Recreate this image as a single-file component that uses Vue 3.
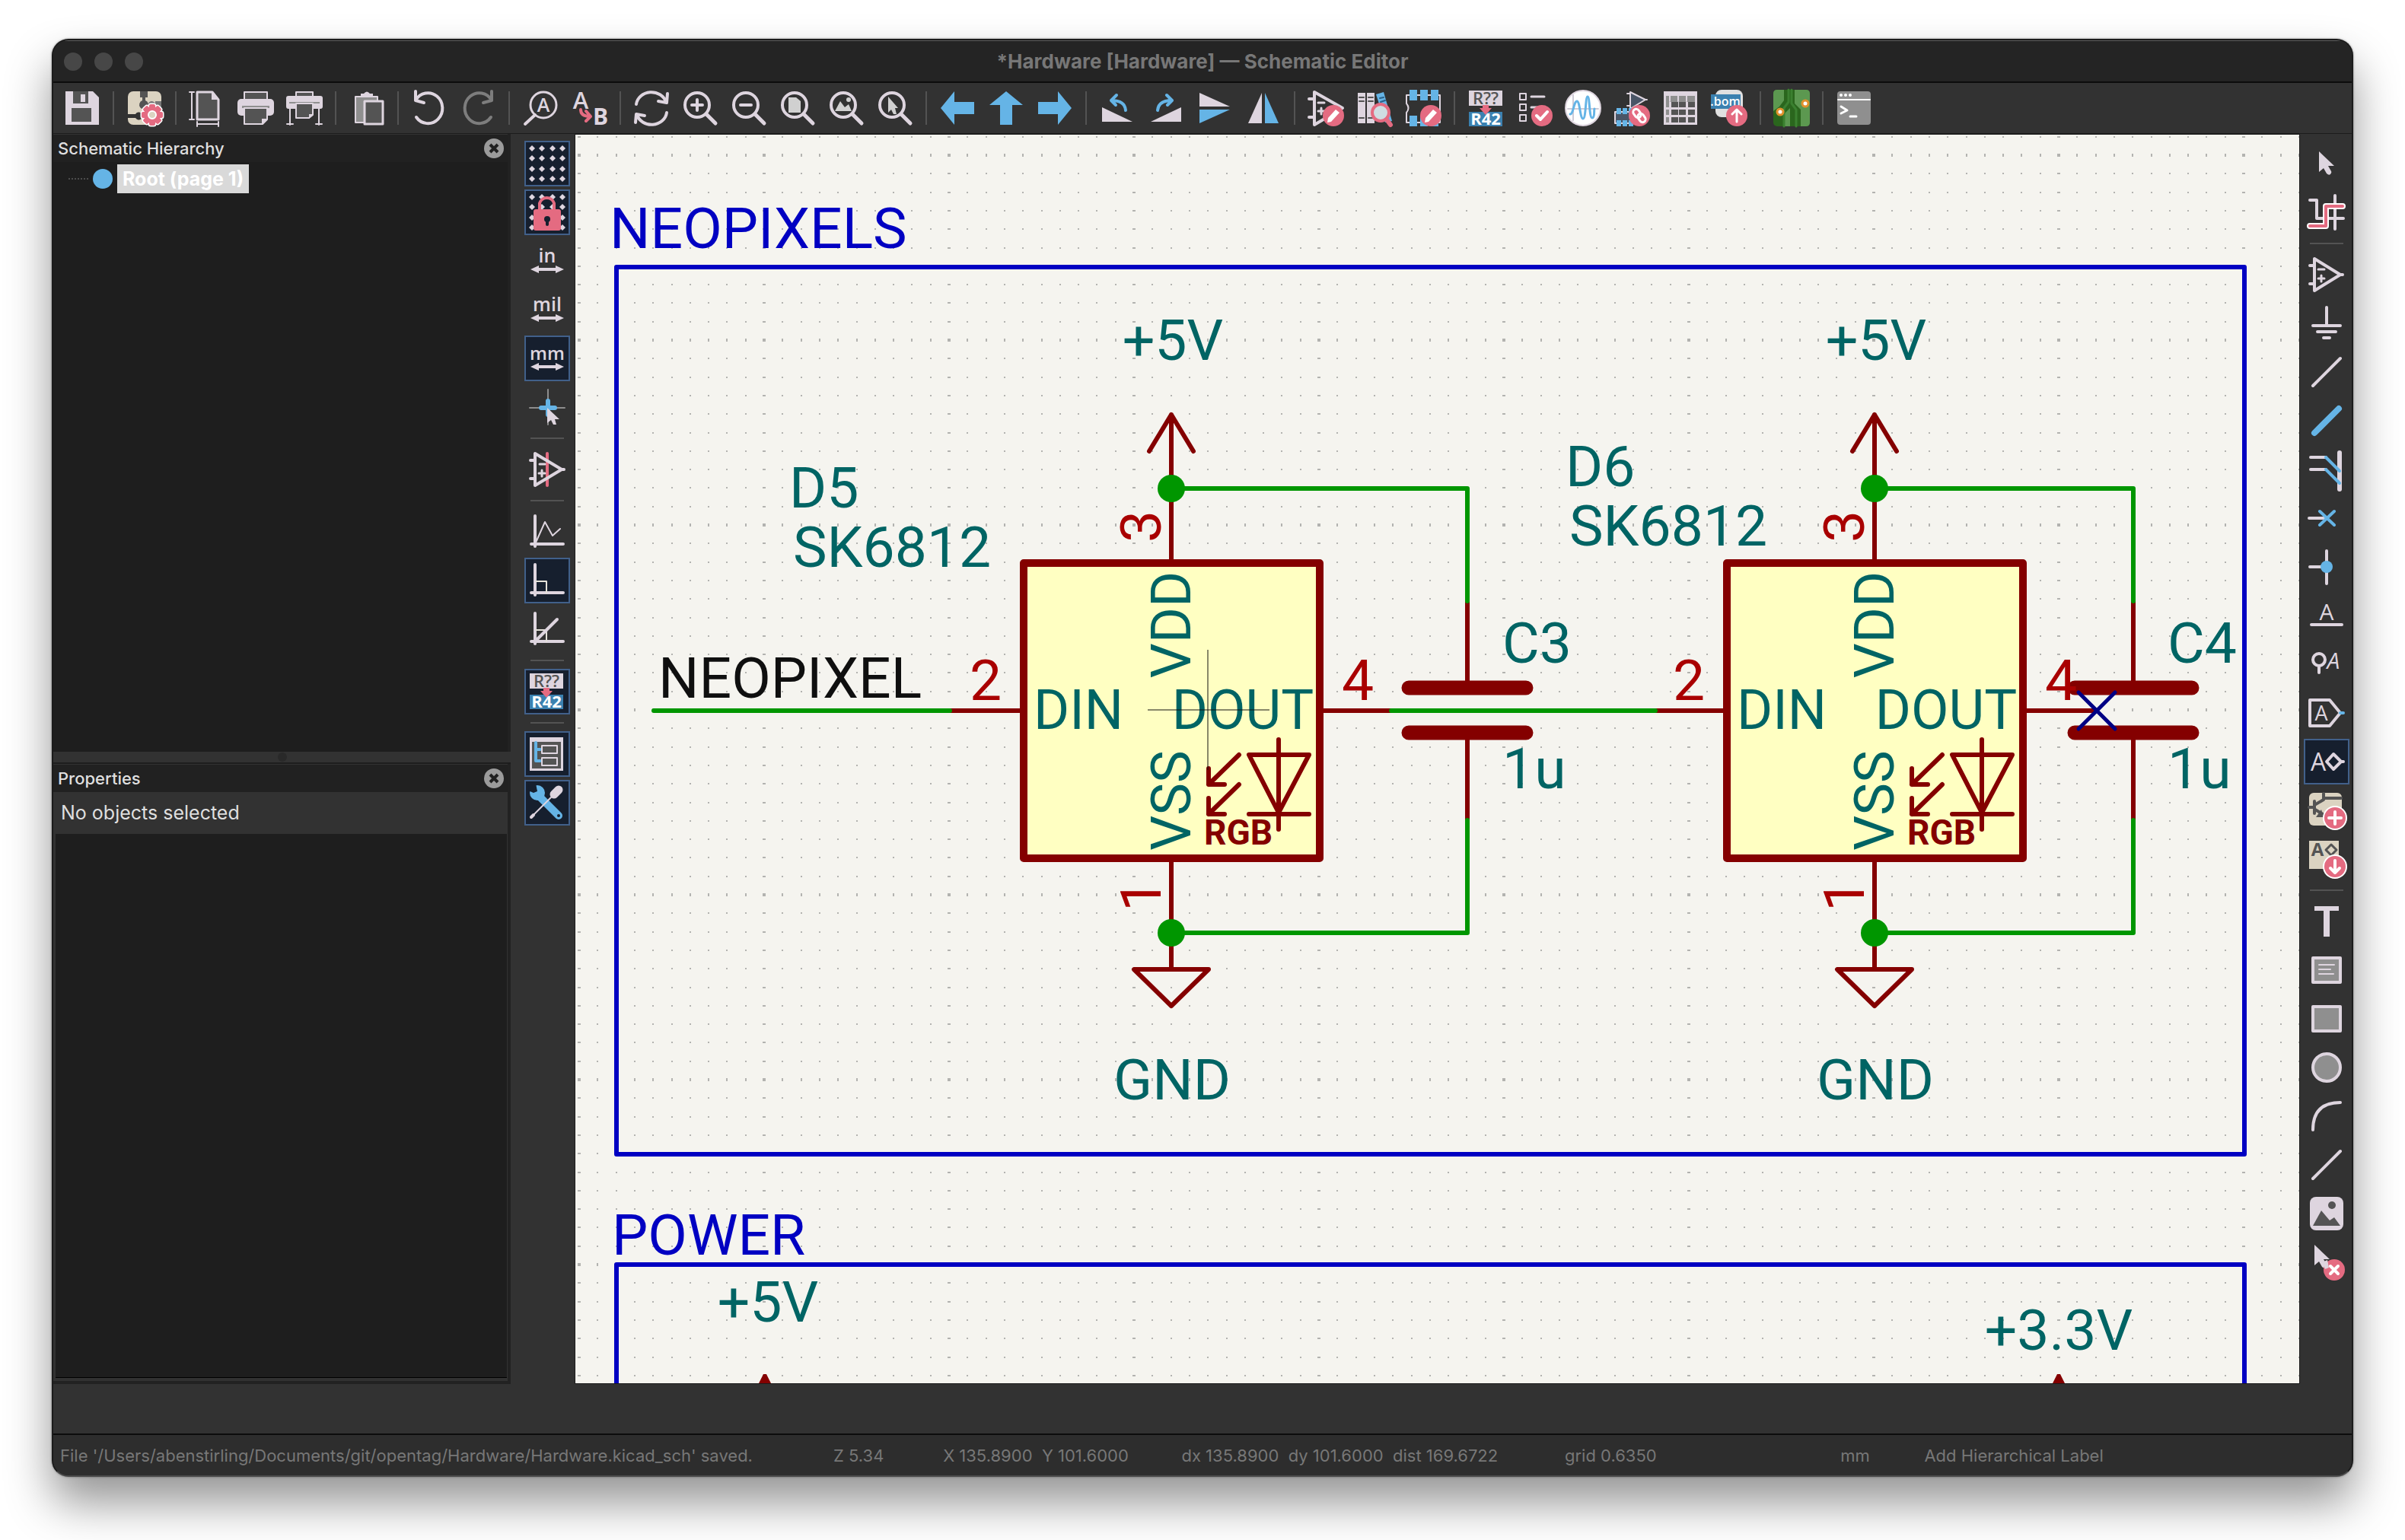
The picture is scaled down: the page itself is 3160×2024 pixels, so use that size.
<script setup>
const L = '#ded5df'
const B = '#65b4e6'
const R = '#e46b81'
const G = '#8f8f8f'
const D = '#545454'
const C = '#dbd3c1'

const solid = (d, c = L) => `<path d="${d}" fill="${c}" stroke="none"/>`
const line = (d, c = L, w = 4) => `<path d="${d}" stroke="${c}" stroke-width="${w}"/>`
const rect = (x, y, w, h, c = L, r = 0) => `<rect x="${x}" y="${y}" width="${w}" height="${h}" rx="${r}" fill="${c}" stroke="none"/>`
const disc = (x, y, r, c = L) => `<circle cx="${x}" cy="${y}" r="${r}" fill="${c}" stroke="none"/>`
const label = (t, x, y, size, c = L, weight = 600, extra = '') =>
  `<text x="${x}" y="${y}" font-size="${size}" font-weight="${weight}" fill="${c}" stroke="none" text-anchor="middle" ${extra}>${t}</text>`

const lens = (inner) => `<circle cx="20" cy="20" r="16" stroke-width="4"/>${line('M32 32 44 44', L, 5)}${inner}`
const pencil = disc(34, 34, 14, R) + solid('M26 43 27 37 37 26 42 30 31 42Z', '#fff')
const dots = [5, 18, 32, 45].map((y) => [5, 18, 32, 45].map((x) => solid(`M${x} ${y - 4}l4 4-4 4-4-4Z`)).join('')).join('')
const dims = solid('M3 36 14 31V34H36V31L47 36 36 41V38H14V41Z')
const annotate = rect(2, 1, 44, 20) + label('R??', 24, 19, 22, D) + rect(2, 29, 44, 19, '#3b81b0') +
  solid('M20 20H28V24H32L24 33 16 24H20Z', R) + label('R42', 24, 46, 22, '#fff', 700)
const gear = [0, 45, 90, 135].map((a) => `<rect x="30" y="19" width="8" height="28" rx="2" transform="rotate(${a} 34 33)" />`).join('')
const axes = line('M9 4V44M4 41H46')
const pointer = (x, y) => solid(`M${x} ${y}v27l6-5 4 7q3 3 5 1t1-4l-4-7h8Z`)

const icons = {
  save: solid('M2 2H38L46 10V46H2Z') + rect(12, 2, 20, 16, D) + rect(22, 6, 6, 10) + rect(10, 24, 26, 18, D),
  setup: rect(2, 2, 44, 44, C, 7) + solid('M18 2H28V10H25V14A6 6 0 1 1 21 14V10H18Z', D) + solid('M46 15V26H38V22A5 5 0 1 1 38 18V15Z', '#777') +
    solid('M2 32H12A5 5 0 1 1 12 37H2Z', '#333') + `<g fill="#fff" stroke="#fff" stroke-width="3">${gear}</g><g fill="${R}" stroke="none">${gear}<circle cx="34" cy="33" r="11"/></g>` + disc(34, 33, 5, C) + `<circle cx="34" cy="33" r="5" stroke="#fff" stroke-width="2"/>`,
  page: `<path d="M11 3H31L39 13V39H11Z" fill="${D}" stroke-width="3"/>` + solid('M30 2V13H40Z') + line('M4 3V39M1 3H7M1 39H7M11 45H39M11 42V48M39 42V48', L, 2),
  print: `<path d="M9 3H39V14H9Z" fill="${D}" stroke-width="2"/>` + rect(0, 12, 48, 22, L, 5) + rect(6, 21, 36, 3, G) + `<path d="M9 24H39V39L33 45H9Z" fill="${D}" stroke-width="2"/>` + solid('M32 46V38H40Z'),
  plot: `<path d="M13 3H35V10H13Z" fill="${D}" stroke-width="2"/>` + rect(0, 8, 48, 17, L, 3) + rect(4, 16, 40, 2, G) + `<path d="M13 18H35V33L30 37H13Z" fill="${D}" stroke-width="2"/>` + line('M5 24V46M43 24V46M1 45H9M39 45H47', L, 2) + solid('M30 38V32H36Z'),
  paste: `<path d="M9 9H38V43H9Z" fill="${G}" stroke-width="2"/>` + solid('M16 8V5H20Q24 0 28 5H32V8Z') + `<path d="M21 15H45V45H21Z" fill="${D}" stroke-width="3"/>`,
  undo: line('M6 2V14L17 17M6 14A19 20 0 1 1 7 36'),
  redo: line('M42 2V14L31 17M42 14A19 20 0 1 0 41 36', '#7d7d7d'),
  find: `<circle cx="28" cy="20" r="17" stroke-width="3"/>` + line('M17 33 4 45') + label('A', 28, 29, 25),
  replace: label('A', 13, 25, 31) + label('B', 39, 46, 30, L, 700) + line('M13 26Q13 35 25 35M20 28 26 35 20 41', R, 4),
  refresh: line('M4 19A20 18 0 0 1 43 16M45 5 44 17 33 15') + line('M44 30A20 18 0 0 1 5 33M3 43 4 32 15 34'),
  zoomin: lens(line('M13 20H27M20 13V27')),
  zoomout: lens(line('M13 20H27')),
  zoomfit: lens(solid('M12 10H22L28 15V30H12Z', '#d0d0d0')),
  zoomobj: lens(solid('M9 28 16 15 22 23 27 19 31 28Z', '#d0d0d0') + disc(27, 13, 3, '#d0d0d0')),
  zoomsel: lens(solid('M15 9V30L19 26 22 32H26L24 24H28Z', '#d0d0d0')),
  left: solid('M2 24 20 2V16H46V32H20V46Z', B),
  up: solid('M24 2 46 20H32V46H16V20H2Z', B),
  right: solid('M46 24 28 2V16H2V32H28V46Z', B),
  ccw: solid('M4 23V42H44Z') + line('M35 27Q34 14 16 14M23 7 16 14 22 20', B),
  cw: solid('M44 23V42H4Z') + line('M13 27Q14 14 32 14M25 7 32 14 26 20', B),
  mirrorv: solid('M4 4V22H44Z') + solid('M4 44V26H44Z', B),
  mirrorh: solid('M22 4V44H4Z') + solid('M26 4V44H44Z', B),
  symedit: line('M9 3V46L46 24Z') + line('M2 12H8M2 36H8', L, 4) + line('M14 17H22M14 28H22M18 24V32', L, 3) + pencil,
  library: rect(2, 4, 10, 40) + rect(14, 4, 10, 40) + line('M4 10H10M4 15H10M16 10H22M16 15H22M4 37H10M16 37H22', D, 2) + solid('M26 6 36 3 47 41 38 43Z', B) + line('M31 11 36 10M32 16 38 14', '#29628a', 2) +
    `<circle cx="32" cy="30" r="11" fill="#cfdde2" stroke="${R}" stroke-width="4"/>` + line('M40 39 45 46', R, 6),
  fpedit: `<path d="M2 7H46V43H2V30Q7 24 2 18Z" stroke-width="2"/>` + [6, 20, 34].map((x) => rect(x, 0, 10, 14, B) + rect(x, 34, 10, 14, B)).join('') + pencil,
  annotate,
  erc: '<g stroke-width="2"><path d="M5 5h8v8H5ZM5 19h8v8H5ZM5 33h8v8H5Z"/></g>' + line('M20 9H37M20 23H30', L, 3) + disc(34, 34, 14, R) + line('M27 34 32 39 41 29', '#fff'),
  sim: `<circle cx="24" cy="24" r="23" fill="#fff" stroke-width="2"/>` + line('M11 7V40M4 25H44', '#cfcbd6', 2) + line('M7 32C11 33 12 15 16 15S20 38 24 38 27 9 30 9 32 37 36 37 38 27 39 25', B, 3),
  assign: `<path d="M22 3V25L42 13Z" fill="#4a5567" stroke-width="2"/>` + line('M18 5H22M18 21H22M42 13H44', L, 2) + rect(2, 29, 26, 14, '#4a5567') + `<path d="M2 29H26V44H2Z" stroke-width="2"/>` + [4, 12, 20].map((x) => rect(x, 24, 6, 8, B) + rect(x, 40, 6, 8, B)).join('') + disc(34, 34, 14, R) +
    `<g stroke="#fff" stroke-width="3"><rect x="27" y="25" width="8" height="12" rx="4" transform="rotate(-35 31 31)"/><rect x="33" y="31" width="8" height="12" rx="4" transform="rotate(-35 37 37)"/></g>`,
  table: rect(2, 2, 44, 44) + rect(5, 8, 38, 8, G) + [16, 26, 36].map((y) => rect(5, y, 4, 7, G) + [12, 22, 34].map((x) => rect(x, y, 9, 7, D)).join('')).join('') + line('M10 8V15M21 8V15M32 8V15', L, 2),
  bom: rect(6, 0, 36, 36, '#e0e0e0', 8) + rect(0, 6, 39, 19, '#3b81b0') + label('.bom', 19, 21, 16, '#fff') + disc(34, 34, 14, R) + line('M34 42V27M28 32 34 26 40 32', '#fff', 3),
  pcb: rect(0, 0, 48, 48, '#2a661d', 5) + solid('M28 0V18L36 26V48H43Q48 48 48 43V5Q48 0 43 0Z', '#5c9850') + solid('M0 5V28L8 22 14 14V0H5Q0 0 0 5ZM14 48V32L22 24V48Z', '#5c9850') + line('M20 0V16L14 24V48M24 0V18L30 26V48', '#3b8030', 3) +
    `<g fill="#fff" stroke="#e0912d" stroke-width="3"><circle cx="9" cy="29" r="4"/><circle cx="42" cy="18" r="4"/></g>`,
  console: rect(2, 2, 44, 44, G, 4) + line('M3 13H45', '#fff', 2) + disc(7, 7, 2, '#fff') + disc(13, 7, 2, '#fff') + disc(19, 7, 2, '#fff') + line('M7 22 15 27 7 31M19 35H27', '#fff', 3),

  grid: dots,
  gridlock: dots + line('M15 22V13A10 10 0 0 1 34 13V22', R) + rect(7, 21, 36, 28, R, 3) + disc(25, 34, 4, '#161f2e') + rect(23, 34, 4, 9, '#161f2e', 2),
  inch: label('in', 25, 27, 25, L, 600) + dims,
  mil: label('mil', 25, 27, 25, L, 600) + dims,
  mm: label('mm', 25, 27, 24, L, 600) + dims,
  cursor: line('M2 26H48M26 2V48', '#8d8d8d', 2) + line('M17 26H35M26 17V35', B, 6) + solid('M25 26V46L30 42 33 48H37L35 41H41Z'),
  hidden: line('M25 4V46', R) + line('M9 4V46L44 25Z', L, 4) + line('M3 13H8M3 37H8M44 25H47') + line('M15 18H22M14 30H22M18 26V34', L, 3),
  free: axes + line('M10 39 22 12 32 30 42 21', L, 2),
  ortho: axes + line('M10 26H24V41', '#e5e2da', 2),
  diag: axes + line('M10 26H24V41', '#e5e2da', 2) + line('M11 39 38 12'),
  hierarchy: rect(2, 3, 44, 44) + rect(5, 9, 38, 35, D) + line('M10 10V34H16M10 19H16', B, 4) + '<path d="M18 14H38V24H18ZM18 30H38V40H18Z" stroke-width="2"/>',
  tools: line('M14 16 40 42', B, 10) + disc(12, 12, 10, B) + solid('M1 0H10L12 10 7 12 0 9Z', '#161f2e') + disc(40, 42, 2, '#161f2e') + line('M4 44 30 18', L, 2) + line('M4 44 7 41', L, 4) + line('M34 14 40 8', L, 11),

  select: pointer(15, 9),
  highlight: line('M3 9H12V33H47M36 3V47') + line('M3 43H24V17H46', '#fff', 8) + line('M3 43H24V17H46', R, 4),
  symbol: line('M9 4V46L43 25Z') + line('M3 13H8M3 37H8M43 25H46') + line('M14 18H22M14 30H22M18 26V34', L, 3),
  power: line('M25 4V27M7 28H43M13 36H37M21 44H29'),
  wire: line('M7 43 43 7'),
  bus: line('M9 41 41 9', B, 8),
  entry: line('M4 9H24M4 25H24') + line('M42 3V51', L, 6) + line('M24 9 42 27M24 25 42 43', B),
  noconnect: line('M2 25H22') + line('M16 16 35 34M35 16 16 34', B),
  junction: line('M25 4V47M3 25H24') + disc(25, 25, 8, B),
  netlabel: label('A', 25, 31, 30, L, 500) + line('M5 37H45'),
  netclass: '<circle cx="15" cy="19" r="8" stroke-width="4"/>' + line('M15 28V36', L, 4) + label('A', 34, 31, 30, L, 500, 'font-style="italic"'),
  global: line('M3 8H29L43 25 29 42H3Z') + label('A', 18, 35, 27, L, 500) + line('M43 25H47', B),
  hierlabel: label('A', 14, 37, 32, L, 500) + line('M25 25 34 15 44 25 34 35ZM44 25H47'),
  sheet: rect(2, 2, 43, 43, C, 6) + line('M2 21H9M9 13V29M9 18 21 11V3M21 9H44M10 24 20 30', D, 4) + solid('M21 34 11 34 18 24Z', D) + disc(36, 35, 16, '#fff') + disc(36, 35, 14, R) + line('M28 35H44M36 27V43', '#fff', 4),
  import: rect(2, 1, 39, 37, C) + label('A', 13, 21, 24, D, 700) + line('M31 6 38 13 31 20 24 13Z', D, 3) + disc(36, 35, 16, '#fff') + disc(36, 35, 14, R) + line('M36 27V42M30 37 36 43 42 37', '#fff', 4),
  text: rect(9, 5, 32, 6) + rect(21, 5, 8, 40),
  textbox: `<rect x="7" y="9" width="36" height="32" fill="${G}"/>` + line('M15 18H35M15 24H30M15 30H34', L, 2),
  rectangle: `<rect x="7" y="9" width="36" height="32" fill="${G}"/>`,
  circle: `<circle cx="25" cy="25" r="18" fill="${G}"/>`,
  arc: line('M7 43Q7 7 43 7'),
  image: rect(3, 3, 44, 44, L, 8) + disc(32, 14, 5, D) + solid('M7 41 18 21 29 34 35 30 43 41Z', D),
  erase: pointer(9, 2) + disc(35, 35, 14, R) + line('M30 30 40 40M40 30 30 40', '#fff', 4) + solid('M19 25 26 22 28 32 23 34Z'),
}

const top = [
  ['save', 'Save'], null, ['setup', 'Schematic setup'], null,
  ['page', 'Page settings'], ['print', 'Print'], ['plot', 'Plot'], null, ['paste', 'Paste'], null,
  ['undo', 'Undo'], ['redo', 'Redo'], null, ['find', 'Find'], ['replace', 'Find and replace'], null,
  ['refresh', 'Refresh'], ['zoomin', 'Zoom in'], ['zoomout', 'Zoom out'], ['zoomfit', 'Zoom to page'],
  ['zoomobj', 'Zoom to objects'], ['zoomsel', 'Zoom to selection'], null,
  ['left', 'Navigate back'], ['up', 'Navigate up'], ['right', 'Navigate forward'], null,
  ['ccw', 'Rotate counterclockwise'], ['cw', 'Rotate clockwise'], ['mirrorv', 'Mirror vertically'], ['mirrorh', 'Mirror horizontally'], null,
  ['symedit', 'Symbol editor'], ['library', 'Symbol library browser'], ['fpedit', 'Footprint editor'], null,
  ['annotate', 'Annotate'], ['erc', 'Electrical rules checker'], ['sim', 'Simulator'], ['assign', 'Assign footprints'],
  ['table', 'Edit symbol fields'], ['bom', 'Bill of materials'], null, ['pcb', 'Open PCB'], null, ['console', 'Scripting console'],
]
const options = [
  ['grid', 'Show grid', 1], ['gridlock', 'Grid overrides', 1], ['inch', 'Inches'], ['mil', 'Mils'], ['mm', 'Millimetres', 1], ['cursor', 'Full crosshair'], null,
  ['hidden', 'Show hidden pins'], null, ['free', 'Free angle'], ['ortho', 'Right angle', 1], ['diag', '45 degrees'], null,
  ['annotate', 'Annotate automatically', 1], null, ['hierarchy', 'Schematic hierarchy', 1], ['tools', 'Properties', 1],
]
const tools = [
  ['select', 'Select'], ['highlight', 'Highlight net'], null, ['symbol', 'Add symbol'], ['power', 'Add power'], ['wire', 'Add wire'],
  ['bus', 'Add bus'], ['entry', 'Add bus entry'], ['noconnect', 'Add no-connect'], ['junction', 'Add junction'], ['netlabel', 'Add net label'],
  ['netclass', 'Add net class directive'], ['global', 'Add global label'], ['hierlabel', 'Add hierarchical label', 1], ['sheet', 'Add sheet'],
  ['import', 'Import sheet pin'], null, ['text', 'Add text'], ['textbox', 'Add text box'], ['rectangle', 'Add rectangle'], ['circle', 'Add circle'],
  ['arc', 'Add arc'], ['wire', 'Add line'], ['image', 'Add image'], ['erase', 'Delete'],
]

const gridDots = Array.from({ length: 100 }, (_, i) => {
  const c = i % 10
  const r = Math.floor(i / 10)
  return {
    x: c ? Math.round(c * 24.3) + 1 : 0,
    y: r ? Math.round(r * 24.3) + 1 : 0,
    w: c ? 2 : 4,
    h: r ? 2 : 4,
  }
})
const leds = [
  { dx: 0, ref: 'D5', rx: 1037, ry: 667, vx: 1042, vy: 745 },
  { dx: 924, ref: 'D6', rx: 2057, ry: 639, vx: 2062, vy: 717 },
]
const caps = [{ x: 1928, ref: 'C3', tx: 1974 }, { x: 2803, ref: 'C4', tx: 2848 }]
</script>

<template>
  <div class="desktop">
    <main class="window">
      <header class="titlebar">
        <div class="lights"><i></i><i></i><i></i></div>
        <h1>*Hardware [Hardware] — Schematic Editor</h1>
      </header>

      <nav class="toolbar" aria-label="Main toolbar">
        <template v-for="(t, i) in top" :key="i">
          <button v-if="t" :aria-label="t[1]" type="button"><svg viewBox="0 0 48 48" v-html="icons[t[0]]"></svg></button>
          <span v-else class="sep"></span>
        </template>
      </nav>

      <div class="work">
        <aside class="side">
          <section class="panel hierarchy">
            <header><h2>Schematic Hierarchy</h2>
              <button type="button" aria-label="Close hierarchy" class="close"><svg viewBox="0 0 26 26"><circle cx="13" cy="13" r="13" /><path d="M8 8 18 18M18 8 8 18" /></svg></button>
            </header>
            <div class="tree"><span class="branch"></span><span class="node"></span><strong>Root (page 1)</strong></div>
          </section>
          <div class="sash"><i></i></div>
          <section class="panel properties">
            <header><h2>Properties</h2>
              <button type="button" aria-label="Close properties" class="close"><svg viewBox="0 0 26 26"><circle cx="13" cy="13" r="13" /><path d="M8 8 18 18M18 8 8 18" /></svg></button>
            </header>
            <p>No objects selected</p>
            <div class="props"></div>
          </section>
        </aside>

        <nav class="column options" aria-label="Display options">
          <template v-for="(t, i) in options" :key="i">
            <button v-if="t" :aria-label="t[1]" :class="{ on: t[2] }" type="button"><svg viewBox="0 0 50 50" v-html="icons[t[0]]"></svg></button>
            <span v-else class="sep"></span>
          </template>
        </nav>

        <div class="canvas">
          <svg role="img" aria-label="Schematic sheet">
            <defs>
              <pattern id="grid" x="3" y="25" width="243" height="243" patternUnits="userSpaceOnUse">
                <rect v-for="(d, i) in gridDots" :key="i" :x="d.x" :y="d.y" :width="d.w" :height="d.h" fill="#b3b3b0" />
              </pattern>
            </defs>
            <rect width="100%" height="100%" fill="url(#grid)" />
            <g transform="translate(-756 -177)">
              <g class="frame">
                <rect x="810" y="351" width="2139" height="1166" />
                <rect x="810" y="1662" width="2139" height="1166" />
              </g>
              <g class="kt note"><text x="801" y="326">NEOPIXELS</text><text x="804" y="1649">POWER</text></g>

              <g v-for="c in caps" :key="c.ref">
                <path class="pin" :d="`M${c.x} 790V904M${c.x} 963V1078`" />
                <path class="plate" :d="`M${c.x - 77} 904H${c.x + 77}M${c.x - 77} 963H${c.x + 77}`" />
                <g class="kt field"><text :x="c.tx" y="871">{{ c.ref }}</text><text :x="c.tx" y="1036">1u</text></g>
              </g>

              <g class="kt field">
                <g v-for="l in leds" :key="l.ref"><text :x="l.rx" :y="l.ry">{{ l.ref }}</text><text :x="l.vx" :y="l.vy">SK6812</text></g>
              </g>
              <g v-for="l in leds" :key="l.dx" :transform="`translate(${l.dx} 0)`">
                <rect class="body" x="1345" y="740" width="389" height="388" />
                <g class="pin">
                  <path d="M1539 545V740M1510 593 1539 545 1568 593M1539 1128V1274M1490 1274H1588L1539 1322ZM1248 934H1345M1734 934H1831" />
                  <path d="M1628 992 1588 1031M1588 1010V1031H1609M1628 1031 1588 1070M1588 1049V1070H1609M1641 992H1720L1680 1068ZM1641 1070H1720M1680 972V1090" />
                </g>
                <g class="kt pinname">
                  <text x="1417" y="958">DIN</text><text x="1633" y="958">DOUT</text>
                  <text transform="translate(1564 821) rotate(-90)">VDD</text>
                  <text transform="translate(1564 1052) rotate(-90)">VSS</text>
                </g>
                <g class="kt number">
                  <text x="1295" y="920">2</text><text x="1784" y="920">4</text>
                  <text transform="translate(1525 692) rotate(-90)">3</text>
                  <text transform="translate(1525 1177) rotate(-90)">1</text>
                </g>
                <text class="rgb" x="1627" y="1110">RGB</text>
                <g class="kt field mid"><text x="1541" y="473">+5V</text><text x="1540" y="1445">GND</text></g>
              </g>

              <path class="wire" d="M859 934H1248M1828 934H2175M1539 642H1928V790M1539 1226H1928V1078M2463 642H2803V790M2463 1226H2803V1078" />
              <g class="dot"><circle cx="1539" cy="642" r="18" /><circle cx="1539" cy="1226" r="18" /><circle cx="2463" cy="642" r="18" /><circle cx="2463" cy="1226" r="18" /></g>
              <path class="nc" d="M2731 910 2779 958M2779 910 2731 958" />
              <text class="kt label" x="865" y="917">NEOPIXEL</text>

              <g class="kt field mid"><text x="1009" y="1737">+5V</text><text x="2705" y="1774">+3.3V</text></g>
              <path class="tip" d="M1003 1806H1007L1015 1822H995ZM2703 1806H2707L2715 1822H2695Z" />
              <path class="cross" d="M1587 854V1012M1508 933H1668" />
            </g>
          </svg>
        </div>

        <nav class="column tools" aria-label="Drawing tools">
          <template v-for="(t, i) in tools" :key="i">
            <button v-if="t" :aria-label="t[1]" :class="{ on: t[2] }" type="button"><svg viewBox="0 0 50 50" v-html="icons[t[0]]"></svg></button>
            <span v-else class="sep"></span>
          </template>
        </nav>
      </div>

      <div class="message"></div>
      <footer class="status">
        <span>File '/Users/abenstirling/Documents/git/opentag/Hardware/Hardware.kicad_sch' saved.</span>
        <span>Z 5.34</span>
        <span>X 135.8900&nbsp; Y 101.6000</span>
        <span>dx 135.8900&nbsp; dy 101.6000&nbsp; dist 169.6722</span>
        <span>grid 0.6350</span>
        <span>mm</span>
        <span>Add Hierarchical Label</span>
      </footer>
    </main>
  </div>
</template>

<style>
body {
  margin: 0;
  background: #fff;
}
</style>

<style scoped>
.desktop {
  box-sizing: border-box;
  display: flex;
  min-height: 100vh;
  padding: 51px 68px 83px;
  overflow: hidden;
  background: #fff;
}
.window {
  box-sizing: border-box;
  display: flex;
  flex: 1;
  flex-direction: column;
  min-width: 0;
  border: 2px solid #1b1b1b;
  border-bottom-color: #4a4a4a;
  border-radius: 22px;
  overflow: hidden;
  background: #323232;
  color: #dfdfdf;
  font-family: Inter, "Liberation Sans", sans-serif;
  box-shadow: 0 0 3px rgba(0, 0, 0, 0.4), 0 34px 60px rgba(0, 0, 0, 0.42);
}
.titlebar {
  display: grid;
  grid-template-columns: 1fr auto 1fr;
  align-items: center;
  height: 53px;
  background: #242424;
  border-top: 1px solid #5c5c5c;
  border-bottom: 2px solid #0c0c0c;
}
.lights {
  display: flex;
  gap: 16px;
  padding-left: 14px;
}
.lights i {
  width: 24px;
  height: 24px;
  border-radius: 50%;
  background: #474747;
}
h1 {
  margin: 0;
  color: #777;
  font-size: 26px;
  font-weight: 700;
}
.toolbar {
  display: flex;
  align-items: center;
  height: 66px;
  padding: 0 6px;
  border-bottom: 1px solid #1c1c1c;
}
button {
  display: flex;
  align-items: center;
  justify-content: center;
  flex: none;
  padding: 0;
  border: 0;
  background: none;
}
.toolbar button {
  width: 64px;
  height: 60px;
}
.toolbar svg {
  width: 48px;
  height: 48px;
}
.toolbar svg,
.column svg {
  overflow: visible;
  fill: none;
  stroke: #ded5df;
  stroke-width: 4px;
  stroke-linecap: round;
  stroke-linejoin: round;
  font-family: "Open Sans", "Noto Sans", sans-serif;
}
.sep {
  flex: none;
  background: #535353;
}
.toolbar .sep {
  width: 2px;
  height: 44px;
  margin: 0 8px;
}
.work {
  display: flex;
  flex: 1;
  min-height: 0;
}
.side {
  display: flex;
  flex-direction: column;
  box-sizing: border-box;
  width: 601px;
  flex: none;
}
.panel {
  display: flex;
  flex: 1;
  flex-direction: column;
  box-sizing: border-box;
  border-right: 4px solid #222;
  background: #1e1e1e;
}
.properties {
  border-bottom: 4px solid #222;
  background: #323232;
}
.panel header {
  display: flex;
  align-items: center;
  justify-content: space-between;
  height: 36px;
  padding: 0 5px 0 6px;
  background: #212121;
  border-top: 1px solid #333;
}
h2 {
  margin: 0;
  font-size: 22px;
  font-weight: 500;
}
.close svg {
  width: 26px;
  height: 26px;
  fill: #9b9b9b;
  stroke: #212121;
  stroke-width: 4px;
}
.close circle {
  stroke: none;
}
.tree {
  display: flex;
  align-items: center;
  height: 38px;
  padding: 3px 0 0 20px;
}
.branch {
  width: 26px;
  border-top: 2px dotted #4c4c4c;
  margin-right: 6px;
}
.node {
  width: 26px;
  height: 26px;
  margin-right: 6px;
  border-radius: 50%;
  background: #65b4e6;
}
.tree strong {
  padding: 0 7px;
  background: #d9d9d9;
  color: #fff;
  font-size: 25px;
  font-weight: 700;
  line-height: 38px;
}
.sash {
  display: flex;
  align-items: center;
  justify-content: center;
  height: 14px;
  border-bottom: 2px solid #1d1d1d;
}
.sash i {
  width: 12px;
  height: 12px;
  border-radius: 50%;
  background: #292929;
}
.properties p {
  margin: 0;
  padding: 0 10px;
  font-size: 25px;
  line-height: 54px;
}
.props {
  flex: 1;
  margin: 1px 1px 4px 3px;
  border-bottom: 1px solid #000;
  background: #1e1e1e;
}
.column {
  display: flex;
  flex-direction: column;
  align-items: center;
  gap: 4px;
  box-sizing: border-box;
  flex: none;
  padding-top: 9px;
}
.options {
  width: 84px;
  padding-left: 12px;
}
.tools {
  width: 68px;
  padding-left: 2px;
}
.column button {
  box-sizing: border-box;
  width: 60px;
  height: 60px;
  border: 2px solid transparent;
}
.column button.on {
  border-color: #41608a;
  background: #161f2e;
}
.column svg {
  width: 50px;
  height: 50px;
}
.column .sep {
  width: 44px;
  height: 2px;
  margin: 6px 0;
}
.canvas {
  flex: 1;
  min-width: 0;
  min-height: 0;
  overflow: hidden;
  box-sizing: border-box;
  border: 1px solid #1c1c1c;
  background: #f5f4ef;
}
.canvas svg {
  display: block;
  width: 100%;
  height: 100%;
}
.frame rect {
  fill: none;
  stroke: #0000c2;
  stroke-width: 6px;
  stroke-linejoin: round;
}
.kt {
  font-family: Roboto, "Noto Sans", sans-serif;
  font-size: 75px;
}
.note {
  fill: #0000c2;
}
.field {
  fill: #006464;
}
.mid,
.pinname,
.number,
.rgb {
  text-anchor: middle;
}
.pinname {
  fill: #006464;
  font-size: 72px;
}
.number {
  fill: #a90000;
}
.label {
  fill: #0f0f0f;
}
.rgb {
  fill: #840000;
  font-family: Roboto, "Noto Sans", sans-serif;
  font-size: 46px;
  font-weight: 700;
}
.body {
  fill: #ffffc2;
  stroke: #840000;
  stroke-width: 10px;
  stroke-linejoin: round;
}
.pin,
.wire,
.nc,
.plate {
  fill: none;
  stroke-width: 6px;
  stroke-linecap: round;
  stroke-linejoin: round;
}
.pin {
  stroke: #840000;
}
.plate {
  stroke: #840000;
  stroke-width: 19px;
}
.wire {
  stroke: #009600;
}
.dot {
  fill: #009600;
}
.nc {
  stroke: #000084;
  stroke-width: 5px;
}
.tip {
  fill: #840000;
}
.cross {
  stroke: #111;
  stroke-width: 1px;
}
.message {
  flex: none;
  height: 65px;
}
.status {
  display: grid;
  grid-template-columns: 1015fr 144fr 313fr 503fr 362fr 110fr 561fr;
  align-items: center;
  flex: none;
  height: 53px;
  padding-left: 9px;
  border-top: 2px solid #0c0c0c;
  background: #2d2d2d;
  color: #777;
  font-size: 22px;
  white-space: pre;
}
</style>
